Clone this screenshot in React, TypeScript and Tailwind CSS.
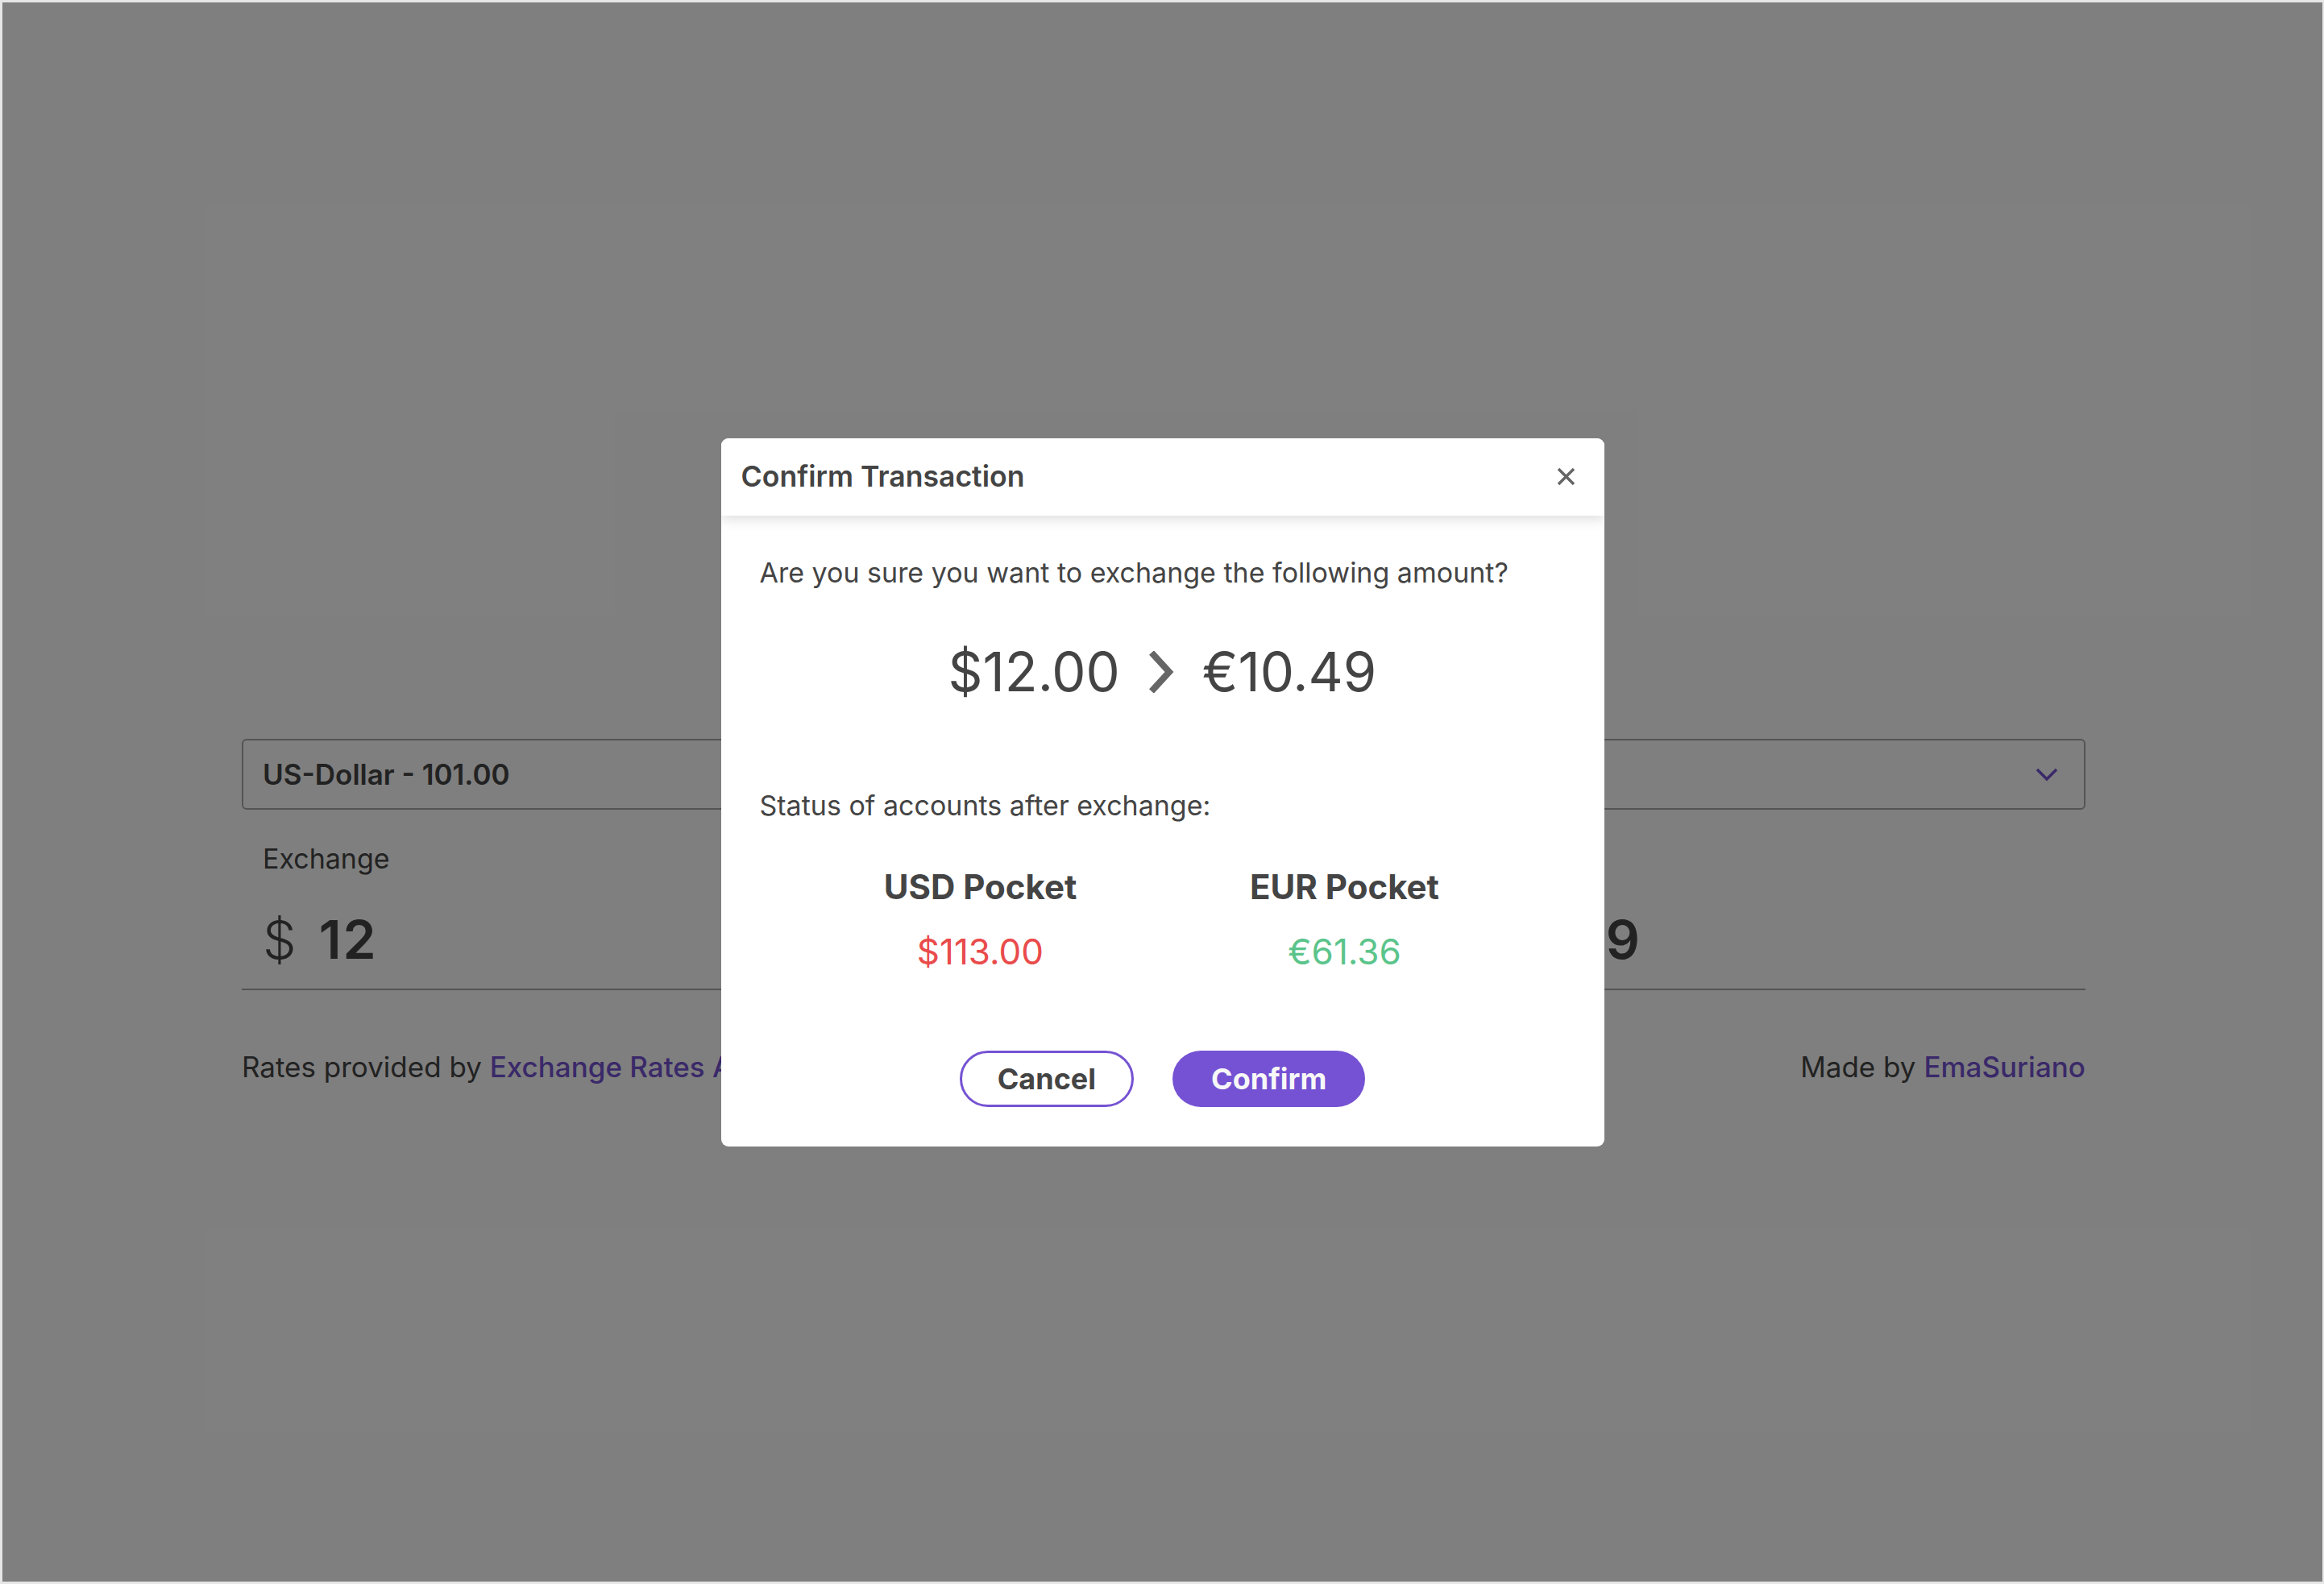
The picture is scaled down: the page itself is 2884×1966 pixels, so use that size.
import React from "react";

function Column({ side }: { side: "left" | "right" }) {
  const isLeft = side === "left";
  return (
    <div className="flex-1 min-w-0">
      <div className="h-[88px] rounded-[6px] border-2 border-[#a8a8a8] px-[24px] flex items-center justify-between">
        <span className="text-[35px] font-semibold text-[#444]">
          {isLeft ? "US-Dollar - 101.00" : "\u00a0"}
        </span>
        <svg width="28" height="17" viewBox="0 0 28 17" className="mr-[8px]">
          <polyline points="2,2 14,14 26,2" fill="none" stroke="#7552d3" strokeWidth="3.5" />
        </svg>
      </div>
      <div className="mt-[35px] px-[26px] text-[34px] leading-[51px] text-[#444]">
        {isLeft ? "Exchange" : "\u00a0"}
      </div>
      <div className="mt-[35px] pb-[21px] border-b-2 border-[#a8a8a8] flex items-center px-[26px] text-[66px] leading-[80px] text-[#444]">
        {isLeft ? (
          <>
            <span className="font-light">$</span>
            <span className="ml-[28px] font-semibold tracking-[2px]">12</span>
          </>
        ) : (
          <>
            <span className="flex-1" />
            <span className="font-semibold">10.49</span>
            <span className="w-[527px]" />
          </>
        )}
      </div>
    </div>
  );
}

export default function App() {
  return (
    <div className="w-[2884px] h-[1966px] bg-[#e6e6e6] pt-[3px] pl-[3px] pb-[3px] pr-[2px] font-['Inter',sans-serif]">
      <div className="relative h-full w-full bg-white overflow-hidden">
        <div className="pt-[914px] pl-[297px] pr-[294px] text-[#444]">
          <div className="flex gap-[48px]">
            <Column side="left" />
            <Column side="right" />
          </div>
          <div className="mt-[71px] flex justify-between text-[35px] leading-[48px] text-[#444]">
            <div>
              Rates provided by{" "}
              <span className="text-[#7552d3] font-medium">Exchange Rates API</span>
            </div>
            <div>
              Made by <span className="text-[#7552d3] font-medium">EmaSuriano</span>
            </div>
          </div>
        </div>

        <div className="absolute inset-0 bg-black/50 flex items-center justify-center">
          <div className="w-[1096px] rounded-[9px] bg-white overflow-hidden text-[#444]">
            <div className="relative z-10 h-[96px] pl-[25px] pr-[36px] flex items-center justify-between bg-white shadow-[0_5px_14px_rgba(0,0,0,0.13)]">
              <span className="text-[35.6px] font-semibold">Confirm Transaction</span>
              <svg width="23" height="23" viewBox="0 0 23 23">
                <path d="M2 2 L21 21 M21 2 L2 21" stroke="#666" strokeWidth="3.6" fill="none" />
              </svg>
            </div>
            <div className="px-[48px] pb-[49px]">
              <p className="mt-[47px] text-[34px] leading-[48px]">
                Are you sure you want to exchange the following amount?
              </p>
              <div className="mt-[59px] flex items-center justify-center gap-[35px] text-[67px] leading-[80px] font-normal">
                <span>$12.00</span>
                <svg width="32" height="52" viewBox="0 0 32 52">
                  <polyline points="4,2 26,26 4,50" fill="none" stroke="#666" strokeWidth="8" />
                </svg>
                <span>€10.49</span>
              </div>
              <p className="mt-[102px] text-[34px] leading-[48px]">
                Status of accounts after exchange:
              </p>
              <div className="mt-[52px] mx-auto w-[904px] grid grid-cols-2 text-center">
                <div>
                  <div className="text-[42px] leading-[50px] font-bold">USD Pocket</div>
                  <div className="mt-[30px] text-[44px] leading-[50px] text-[#e94b4b]">$113.00</div>
                </div>
                <div>
                  <div className="text-[42px] leading-[50px] font-bold">EUR Pocket</div>
                  <div className="mt-[30px] text-[44px] leading-[50px] text-[#5bc48b]">€61.36</div>
                </div>
              </div>
              <div className="mt-[98px] flex justify-center gap-[48px]">
                <button className="h-[70px] px-[44px] rounded-full border-[3px] border-[#7552d3] bg-white text-[36px] font-bold text-[#444]">
                  Cancel
                </button>
                <button className="h-[70px] px-[48px] rounded-full bg-[#7552d3] text-[36px] font-bold text-[#f7f7f7]">
                  Confirm
                </button>
              </div>
            </div>
          </div>
        </div>
      </div>
    </div>
  );
}
